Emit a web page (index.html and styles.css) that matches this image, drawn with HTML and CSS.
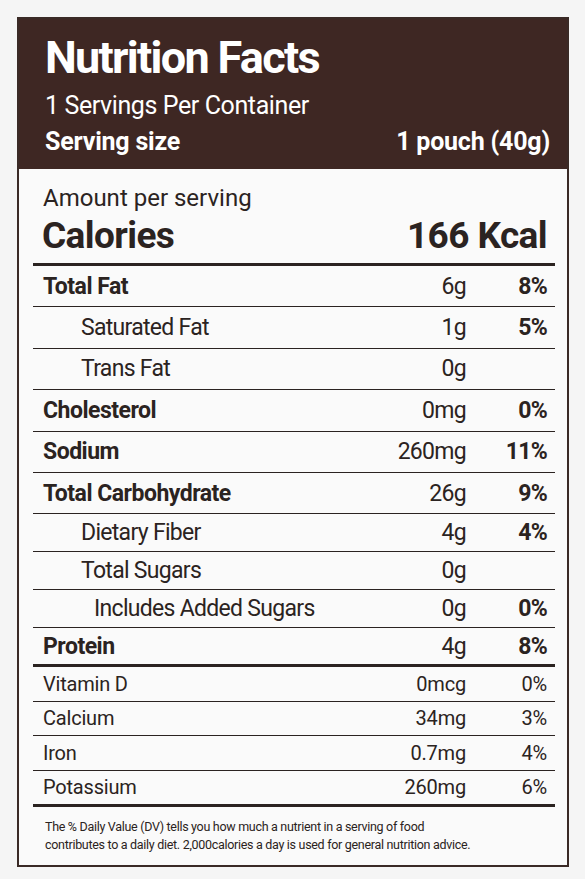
FILE: index.html
```html
<!DOCTYPE html>
<html lang="en">
<head>
    <meta charset="UTF-8">
    <meta name="viewport" content="width=device-width, initial-scale=1.0">
    <title>Nutrition Facts</title>
    <link rel="stylesheet" href="styles.css">
</head>
<body>
    <div id="label">
        <div id="head">
            <h1>Nutrition Facts</h1>
            <p class="servings">1 Servings Per Container</p>
            <div class="size"><span>Serving size</span><span>1 pouch (40g)</span></div>
        </div>
        <div id="facts">
            <p class="amount">Amount per serving</p>
            <div class="cal"><span>Calories</span><span>166 Kcal</span></div>

            <div class="rows">
                <div class="row big bold"><span>Total Fat</span><span class="qty">6g</span><span class="dv">8%</span></div>
                <div class="row big ind"><span>Saturated Fat</span><span class="qty">1g</span><span class="dv">5%</span></div>
                <div class="row big ind"><span>Trans Fat</span><span class="qty">0g</span><span class="dv"></span></div>
                <div class="row big bold"><span>Cholesterol</span><span class="qty">0mg</span><span class="dv">0%</span></div>
                <div class="row big bold"><span>Sodium</span><span class="qty">260mg</span><span class="dv">11%</span></div>
                <div class="row big bold"><span>Total Carbohydrate</span><span class="qty">26g</span><span class="dv">9%</span></div>
                <div class="row mid ind"><span>Dietary Fiber</span><span class="qty">4g</span><span class="dv">4%</span></div>
                <div class="row mid ind"><span>Total Sugars</span><span class="qty">0g</span><span class="dv"></span></div>
                <div class="row mid ind2"><span>Includes Added Sugars</span><span class="qty">0g</span><span class="dv">0%</span></div>
                <div class="row mid bold last"><span>Protein</span><span class="qty">4g</span><span class="dv">8%</span></div>
            </div>

            <div class="rows vit">
                <div class="row"><span>Vitamin D</span><span class="qty">0mcg</span><span class="dv">0%</span></div>
                <div class="row"><span>Calcium</span><span class="qty">34mg</span><span class="dv">3%</span></div>
                <div class="row"><span>Iron</span><span class="qty">0.7mg</span><span class="dv">4%</span></div>
                <div class="row last"><span>Potassium</span><span class="qty">260mg</span><span class="dv">6%</span></div>
            </div>

            <p class="note">The % Daily Value (DV) tells you how much a nutrient in a serving of food contributes to a daily diet. 2,000calories a day is used for general nutrition advice.</p>
        </div>
    </div>
</body>
</html>
```

FILE: styles.css
```css
*{
    margin: 0;
    padding: 0;
    box-sizing: border-box;
    font-family: Roboto, "Liberation Sans", sans-serif;
}
html,body{
    width: 100%;
    height: 100%;
}
body{
    background-color: #f5f5f5;
    padding: 17px 0 0 17px;
}
#label{
    width: 552px;
    height: 850px;
    border: 2px solid #3a2a26;
    background-color: #fafafa;
    color: #2b2321;
}
#head{
    height: 150px;
    background-color: #3e2723;
    color: white;
    padding: 14px 17px 0 26px;
}
#head h1{
    font-size: 45px;
    font-weight: 700;
    letter-spacing: -1.7px;
    line-height: 50px;
}
.servings{
    font-size: 25px;
    letter-spacing: -0.4px;
    line-height: 32px;
    margin-top: 7px;
}
.size{
    display: flex;
    justify-content: space-between;
    font-size: 25px;
    font-weight: 700;
    letter-spacing: -0.2px;
    line-height: 36px;
    margin-top: 2px;
}
#facts{
    padding: 15px 12px 0 14px;
}
.amount{
    font-size: 24px;
    line-height: 28px;
    padding-left: 10px;
}
.cal{
    display: flex;
    justify-content: space-between;
    font-size: 37px;
    font-weight: 700;
    letter-spacing: -0.6px;
    line-height: 46px;
    margin-top: 1px;
    padding: 0 8px 0 9px;
}
.rows{
    border-top: 3px solid #2b2321;
    margin-top: 4px;
}
.row{
    display: grid;
    grid-template-columns: 1fr auto 81px;
    align-items: center;
    height: 41.4px;
    border-bottom: 1px solid #2b2321;
    padding: 0 8px 0 10px;
    font-size: 23px;
    letter-spacing: -0.7px;
}
.row.mid{
    height: 38px;
}
.row.mid.last{
    height: 36px;
}
.row .dv{
    text-align: right;
}
.row.bold span:first-child,
.rows:not(.vit) .dv{
    font-weight: 700;
}
.row.bold span:first-child{
    letter-spacing: -0.5px;
}
.row.ind span:first-child{
    padding-left: 38px;
}
.row.ind2 span:first-child{
    padding-left: 51px;
}
.rows .row.last{
    border-bottom: none;
}
.vit{
    margin-top: 0;
}
.vit .row{
    height: 34.4px;
    font-size: 20px;
    letter-spacing: -0.2px;
}
.vit .row.last{
    height: 36px;
    border-bottom: 3px solid #2b2321;
}
.note{
    width: 450px;
    font-size: 12.5px;
    line-height: 18px;
    letter-spacing: -0.3px;
    padding: 11px 0 0 12px;
}
```
